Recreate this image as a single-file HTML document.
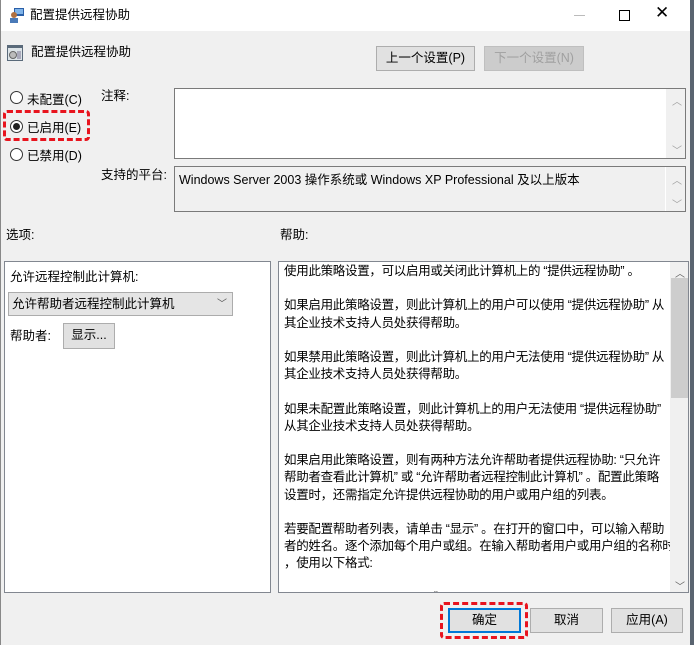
<!DOCTYPE html>
<html><head><meta charset="utf-8"><style>
*{box-sizing:border-box;margin:0;padding:0}
body{width:694px;height:645px;background:#f0f0f0;font-family:"Liberation Sans","Noto Sans CJK SC",sans-serif;font-size:12.5px;color:#000;position:relative;overflow:hidden}
.a{position:absolute;white-space:nowrap}
.t{position:absolute;white-space:nowrap;margin-top:-2px}
.btn{position:absolute;background:#e1e1e1;border:1px solid #adadad;text-align:center;font-size:12.5px}
.box{position:absolute;background:#fff;border:1px solid #7a7a7a}
.radio{position:absolute;width:13px;height:13px;border:1px solid #333;border-radius:50%;background:#fff}
.dash{position:absolute;border:3px dashed #e8141e;border-radius:4px}
.sb{position:absolute;color:#a0a0a0;font-size:10px}
</style></head><body>
<div class="a" style="left:0;top:0;width:690px;height:31px;background:#fff"></div>
<div class="a" style="left:690px;top:0;width:4px;height:645px;background:#5a6470"></div>
<div class="a" style="left:0;top:0;width:1px;height:645px;background:#888"></div>
<svg class="a" style="left:9px;top:7px" width="16" height="16"><rect x="5" y="1" width="10" height="8" fill="#2a5fa8"/><rect x="6" y="2" width="8" height="5" fill="#7fb3e8"/><circle cx="5" cy="8" r="3" fill="#b07040"/><rect x="1" y="11" width="8" height="5" fill="#4a7ab8"/></svg>
<div class="t" style="left:30px;top:6px;font-size:12.5px">配置提供远程协助</div>
<div class="a" style="left:574px;top:15px;width:11px;height:1px;background:#bbb"></div>
<div class="a" style="left:619px;top:10px;width:11px;height:11px;border:1px solid #000"></div>
<div class="a" style="left:655px;top:3px;font-size:17px">✕</div>

<svg class="a" style="left:7px;top:45px" width="16" height="16"><rect x="0" y="0" width="16" height="16" fill="#5a6a7a"/><rect x="1" y="3" width="14" height="12" fill="#dde4e8"/><circle cx="6" cy="10" r="3.5" fill="#bbb" stroke="#666"/><rect x="10" y="6" width="4" height="8" fill="#aab"/></svg>
<div class="t" style="left:31px;top:43px">配置提供远程协助</div>
<div class="btn" style="left:376px;top:46px;width:99px;height:25px;line-height:22px">上一个设置(P)</div>
<div class="btn" style="left:484px;top:46px;width:100px;height:25px;line-height:22px;background:#ccc;border-color:#bfbfbf;color:#a0a0a0">下一个设置(N)</div>

<div class="radio" style="left:10px;top:91px"></div><div class="t" style="left:27px;top:91px">未配置(C)</div>
<div class="radio" style="left:10px;top:120px"></div><div class="a" style="left:13px;top:123px;width:7px;height:7px;border-radius:50%;background:#222"></div><div class="t" style="left:27px;top:119px">已启用(E)</div>
<div class="radio" style="left:10px;top:148px"></div><div class="t" style="left:27px;top:147px">已禁用(D)</div>
<div class="dash" style="left:3px;top:110px;width:87px;height:31px"></div>

<div class="t" style="left:101px;top:87px">注释:</div>
<div class="box" style="left:174px;top:88px;width:512px;height:71px"></div>
<div class="a" style="left:666px;top:89px;width:19px;height:69px;background:#f0f0f0"></div>
<div class="sb" style="left:672px;top:93px">︿</div><div class="sb" style="left:672px;top:142px">﹀</div>
<div class="t" style="left:101px;top:166px">支持的平台:</div>
<div class="a" style="left:174px;top:166px;width:512px;height:46px;border:1px solid #7a7a7a;background:#f0f0f0"></div>
<div class="t" style="left:179px;top:171px">Windows Server 2003 操作系统或 Windows XP Professional 及以上版本</div>
<div class="a" style="left:665px;top:167px;width:1px;height:44px;background:#fff"></div>
<div class="sb" style="left:672px;top:172px">︿</div><div class="sb" style="left:672px;top:196px">﹀</div>

<div class="t" style="left:6px;top:226px">选项:</div>
<div class="t" style="left:280px;top:226px">帮助:</div>

<div class="box" style="left:4px;top:261px;width:267px;height:332px;border-color:#828790"></div>
<div class="t" style="left:10px;top:268px">允许远程控制此计算机:</div>
<div class="a" style="left:8px;top:292px;width:225px;height:24px;background:#e5e5e5;border:1px solid #acacac"></div>
<div class="t" style="left:12px;top:295px">允许帮助者远程控制此计算机</div>
<div class="a" style="left:217px;top:295px;color:#555;font-size:10px">﹀</div>
<div class="t" style="left:10px;top:327px">帮助者:</div>
<div class="btn" style="left:63px;top:323px;width:52px;height:26px;line-height:23px">显示...</div>

<div class="box" style="left:278px;top:261px;width:411px;height:332px;border-color:#828790;overflow:hidden">
<div style="position:absolute;left:5px;top:1px;width:385px;line-height:17.2px;font-size:12.5px;letter-spacing:-0.3px;white-space:nowrap">
使用此策略设置，可以启用或关闭此计算机上的 “提供远程协助” 。<br><br>
如果启用此策略设置，则此计算机上的用户可以使用 “提供远程协助” 从<br>其企业技术支持人员处获得帮助。<br><br>
如果禁用此策略设置，则此计算机上的用户无法使用 “提供远程协助” 从<br>其企业技术支持人员处获得帮助。<br><br>
如果未配置此策略设置，则此计算机上的用户无法使用 “提供远程协助”<br>从其企业技术支持人员处获得帮助。<br><br>
如果启用此策略设置，则有两种方法允许帮助者提供远程协助: “只允许<br>帮助者查看此计算机” 或 “允许帮助者远程控制此计算机” 。配置此策略<br>设置时，还需指定允许提供远程协助的用户或用户组的列表。<br><br>
若要配置帮助者列表，请单击 “显示” 。在打开的窗口中，可以输入帮助<br>者的姓名。逐个添加每个用户或组。在输入帮助者用户或用户组的名称时<br>，使用以下格式:<br><br>
Domain Name\User Name 或
</div>
<div style="position:absolute;left:391px;top:0;width:19px;height:331px;background:#f0f0f0"></div>
<div style="position:absolute;left:392px;top:16px;width:17px;height:120px;background:#cdcdcd"></div>
<div class="sb" style="left:396px;top:3px;color:#606060">︿</div>
<div class="sb" style="left:396px;top:316px;color:#606060">﹀</div>
</div>

<div class="btn" style="left:448px;top:608px;width:73px;height:25px;line-height:21px;border:2px solid #0078d7">确定</div>
<div class="btn" style="left:530px;top:608px;width:73px;height:25px;line-height:22px">取消</div>
<div class="btn" style="left:611px;top:608px;width:72px;height:25px;line-height:22px">应用(A)</div>
<div class="dash" style="left:440px;top:602px;width:88px;height:37px"></div>
</body></html>
